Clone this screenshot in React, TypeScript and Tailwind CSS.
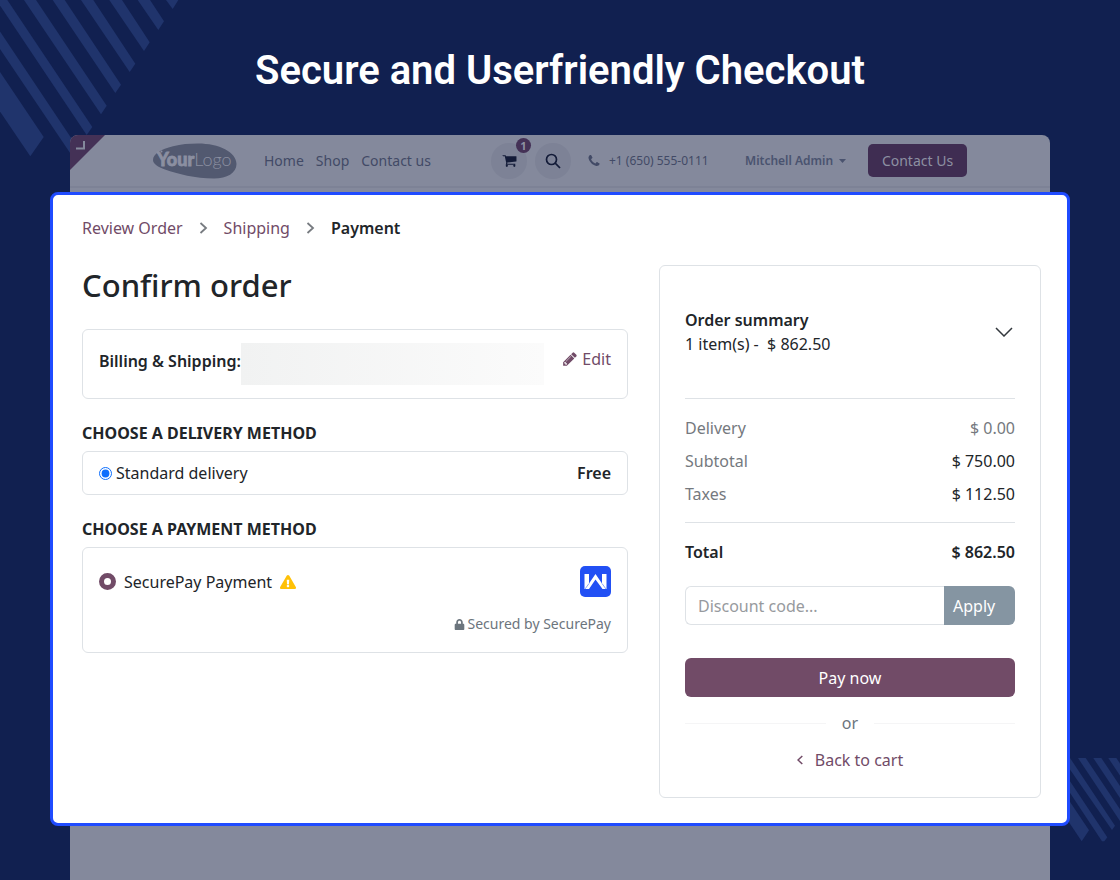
import React from "react";
import { FaExclamationTriangle, FaLock } from "react-icons/fa";

type GlyphProps = { d: string; className?: string };

function Glyph({ d, className }: GlyphProps) {
  return (
    <svg viewBox="0 0 1792 1792" fill="currentColor" className={className} aria-hidden="true">
      <path d={d} />
    </svg>
  );
}

const CART =
  "M704 1536q0 52-38 90t-90 38-90-38-38-90 38-90 90-38 90 38 38 90zm896 0q0 52-38 90t-90 38-90-38-38-90 38-90 90-38 90 38 38 90zm128-1088v512q0 24-16.5 42.5t-40.5 21.5l-1044 122q13 60 13 70 0 16-24 64h920q26 0 45 19t19 45-19 45-45 19h-1024q-26 0-45-19t-19-45q0-11 8-31.5t16-36 21.5-40 15.5-29.5l-177-823h-204q-26 0-45-19t-19-45 19-45 45-19h256q16 0 28.5 6.5t19.5 15.5 13 24.5 8 26 5.5 29.5 4.5 26h1201q26 0 45 19t19 45z";
const PENCIL =
  "M491 1536l91-91-235-235-91 91v107h128v128h107zm523-928q0-22-22-22-10 0-17 7l-542 542q-7 7-7 17 0 22 22 22 10 0 17-7l542-542q7-7 7-17zm-54-192l416 416-832 832h-416v-416zm683 96q0 53-37 90l-166 166-416-416 166-165q36-38 90-38 53 0 91 38l235 234q37 39 37 91z";
const PHONE =
  "M1600 1240q0 27-10 70.5t-21 68.5q-21 50-122 106-94 51-186 51-27 0-53-3.5t-57.5-12.5-47-14.5-55.5-20.5-49-18q-98-35-175-83-127-79-264-216t-216-264q-48-77-83-175-3-9-18-49t-20.5-55.5-14.5-47-12.5-57.5-3.5-53q0-92 51-186 56-101 106-122 25-11 68.5-21t70.5-10q14 0 21 3 18 6 53 76 11 19 30 54t35 63.5 31 53.5q3 4 17.5 25t21.5 35.5 7 28.5q0 20-28.5 50t-62 55-62 53-28.5 46q0 9 5 22.5t8.5 20.5 14 24 11.5 19q76 137 174 235t235 174q2 1 19 11.5t24 14 20.5 8.5 22.5 5q18 0 46-28.5t53-62 55-62 50-28.5q14 0 28.5 7t35.5 21.5 25 17.5q25 15 53.5 31t63.5 35 54 30q70 35 76 53 3 7 3 21z";

function TopStripes() {
  return (
    <svg width="180" height="160" viewBox="0 0 180 160" fill="#20346c" className="absolute left-0 top-0" aria-hidden="true">
      <path d="M166 0H178.300L172.700 9Z" />
      <path d="M137.700 0H150L164 21.300L158.300 30Z" />
      <path d="M109.300 0H122L149.700 42.300L144 51Z" />
      <path d="M81 0H93.300L135.300 63.700L129.700 72Z" />
      <path d="M52.700 0H64.700L121 84.700L115.300 93Z" />
      <path d="M24 0H36L106.700 105.700L101 114.300Z" />
      <path d="M-3.700 0H7.300L92.300 127L86.700 135Z" />
      <path d="M0 31.400L78 148.300L72.300 156.300L0 49Z" />
      <path d="M0 72L43.700 137L30.300 156.300L0 111.500Z" />
    </svg>
  );
}

function BottomStripes() {
  return (
    <svg width="60" height="84" viewBox="0 0 60 84" fill="#20346c" className="absolute bottom-[38px] right-0" aria-hidden="true">
      <path d="M48.300 0H56.300L60 5.500V17.500Z" />
      <path d="M33.300 0H41.300L60 28V40Z" />
      <path d="M18 0H25.700L60 51.300V63Z" />
      <path d="M2 0H10L55 67.700L52 72Z" />
      <path d="M-13 0H-5.500L47.300 79.300L44.300 83.300H42Z" />
      <path d="M-34 0H-19.300L29 72.300L21.700 83.300Z" />
    </svg>
  );
}

function Logo() {
  return (
    <svg width="84" height="36" viewBox="0 0 84 36" role="img" aria-label="YourLogo">
      <path
        d="M0 17C0 11 8 6 20 3.200C28 1.200 36 .5 45 .5C66 .5 83.500 9 83.500 21C83.500 30 74 35.500 61 35.500C42 35.500 25 31 12 26.500C5 24 0 21 0 17Z"
        fill="#525970"
      />
      <text x="4" y="23" fontSize="18" fill="#8b8fa1" fontFamily="Lato, sans-serif">
        <tspan fontWeight="900" stroke="#8b8fa1" strokeWidth="0.800">Your</tspan>
        <tspan fontWeight="300">Logo</tspan>
      </text>
      <circle cx="5" cy="9.500" r="1.200" fill="#8b8fa1" />
      <circle cx="8.500" cy="8.500" r="1" fill="#8b8fa1" />
    </svg>
  );
}

function SiteHeader() {
  return (
    <header className="relative flex h-[53px] items-center overflow-hidden rounded-tl-lg border-b-2 border-[#7d8296] pl-[83px] text-sm text-[#424a66]">
      <svg width="35" height="35" viewBox="0 0 35 35" className="absolute left-0 top-0" aria-hidden="true">
        <path d="M0 0H35L0 35Z" fill="#443156" />
        <path d="M14 6V13.500H6" fill="none" stroke="#84899c" strokeWidth="2" />
      </svg>
      <a href="#home" className="mr-[27px] shrink-0"><Logo /></a>
      <nav className="flex w-[199px] shrink-0 gap-3">
        <a href="#home">Home</a>
        <a href="#shop">Shop</a>
        <a href="#contact" className="whitespace-nowrap">Contact us</a>
      </nav>
      <div className="ml-7 flex shrink-0 gap-2">
        <button aria-label="Cart" className="relative grid size-9 place-items-center rounded-full bg-[#7d8296] text-[#131b38]">
          <Glyph d={CART} className="size-[15px]" />
          <span className="absolute -right-1 -top-[5px] grid size-[15px] place-items-center rounded-full bg-[#443156] text-[11px] font-bold leading-none text-[#8d90a2]">1</span>
        </button>
        <button aria-label="Search" className="grid size-9 place-items-center rounded-full bg-[#7d8296] text-[#131b38]">
          <svg width="16" height="16" viewBox="0 0 16 16" fill="none" stroke="currentColor" strokeWidth="1.700" aria-hidden="true">
            <circle cx="6.500" cy="6.500" r="5" />
            <path d="M10.200 10.200L15 15" />
          </svg>
        </button>
      </div>
      <a href="tel:+16505550111" className="ml-4 flex w-[125px] shrink-0 items-center gap-2 whitespace-nowrap text-xs">
        <Glyph d={PHONE} className="size-[14px]" />
        +1 (650) 555-0111
      </a>
      <button className="ml-[33px] flex w-[103px] shrink-0 items-center gap-[6px] whitespace-nowrap text-xs font-semibold text-[#4a536f]">
        Mitchell Admin
        <svg width="7" height="4" viewBox="0 0 7 4" fill="currentColor" aria-hidden="true"><path d="M0 0H7L3.500 4Z" /></svg>
      </button>
      <a href="#contact" className="ml-5 grid h-[33px] w-[99px] shrink-0 place-items-center rounded-[5px] bg-[#3f2d52] text-sm text-[#8d90a2]">
        Contact Us
      </a>
    </header>
  );
}

function Chevron() {
  return (
    <svg width="9" height="12" viewBox="0 0 9 12" fill="none" stroke="#777b80" strokeWidth="1.800" aria-hidden="true">
      <path d="M1.500 1L7 6L1.500 11" />
    </svg>
  );
}

function SecurePayLogo() {
  return (
    <svg width="31" height="31" viewBox="0 0 31 31" aria-hidden="true">
      <rect width="31" height="31" rx="5" fill="#2250f4" />
      <path d="M4.500 8H9V17.500L15.500 8L22 17.500V8H26.500V23H22.500L15.500 13.500L9 23H4.500Z" fill="#fff" />
      <path d="M9 17.500L5 23M22 17.500L26 23" stroke="#8ea4f8" strokeWidth="1" />
    </svg>
  );
}

type RowProps = { label: string; value: string; muted?: boolean };

function SummaryRow({ label, value, muted }: RowProps) {
  return (
    <tr className="h-[33px]">
      <th scope="row" className="p-0 text-left font-normal text-[#75797e]">{label}</th>
      <td className={muted ? "p-0 text-right text-[#75797e]" : "p-0 text-right"}>{value}</td>
    </tr>
  );
}

function OrderSummary() {
  return (
    <aside className="rounded-md border border-[#dee2e6] px-[25px] pb-[25px] pt-[42px]">
      <button className="flex w-full items-center justify-between pr-[2px] text-left">
        <span>
          <span className="block font-semibold">Order summary</span>
          <span className="block whitespace-pre">1 item(s) -  $ 862.50</span>
        </span>
        <svg width="18" height="10" viewBox="0 0 18 10" fill="none" stroke="#33383d" strokeWidth="1.500" aria-hidden="true">
          <path d="M1 1L9 9L17 1" />
        </svg>
      </button>
      <hr className="mb-3 mt-[42px] border-[#dee2e6]" />
      <table className="w-full">
        <tbody>
          <SummaryRow label="Delivery" value="$ 0.00" muted />
          <SummaryRow label="Subtotal" value="$ 750.00" />
          <SummaryRow label="Taxes" value="$ 112.50" />
        </tbody>
      </table>
      <hr className="my-3 border-[#dee2e6]" />
      <div className="flex h-[33px] items-center justify-between font-semibold">
        <span>Total</span>
        <span>$ 862.50</span>
      </div>
      <form className="mt-[18px] flex h-[39px]" onSubmit={(e) => e.preventDefault()}>
        <input
          type="text"
          aria-label="Discount code"
          placeholder="Discount code..."
          className="min-w-0 flex-1 rounded-l-md border border-r-0 border-[#dee2e6] px-3 placeholder:text-[#979a9e]"
        />
        <button className="w-[71px] rounded-r-md bg-[#8595a2] pl-[9px] text-left text-white">Apply</button>
      </form>
      <button className="mt-[33px] h-[39px] w-full rounded-md bg-[#714b67] text-white">Pay now</button>
      <div className="mt-[14px] flex items-center gap-4 text-[#6c757d]">
        <hr className="flex-1 border-[#f5f5f6]" />
        or
        <hr className="flex-1 border-[#f5f5f6]" />
      </div>
      <a href="#cart" className="mt-[13px] flex items-center justify-center gap-3 text-[#714b67]">
        <svg width="6" height="10" viewBox="0 0 6 10" fill="none" stroke="currentColor" strokeWidth="1.500" aria-hidden="true">
          <path d="M5.300 1L1 5L5.300 9" />
        </svg>
        Back to cart
      </a>
    </aside>
  );
}

function Checkout() {
  return (
    <main className="relative -mx-5 mt-1 rounded-lg border-3 border-[#1f4bff] bg-white pb-[25px] pl-[29px] pr-[26px] pt-[21px] text-base leading-6 text-[#212529]">
      <nav aria-label="Checkout steps" className="flex items-center gap-4 text-[#714b67]">
        <a href="#review">Review Order</a>
        <Chevron />
        <a href="#shipping">Shipping</a>
        <Chevron />
        <span className="font-semibold text-[#212529]">Payment</span>
      </nav>
      <div className="mt-[25px] grid grid-cols-[546fr_382fr] gap-[31px]">
        <div>
          <h1 className="text-[31px] font-medium leading-10">Confirm order</h1>

          <section className="mt-6 flex h-[70px] justify-between rounded-md border border-[#dee2e6] px-4">
            <div className="flex flex-1 pt-[13px]">
              <span className="whitespace-nowrap pt-[6px] font-semibold">Billing &amp; Shipping:</span>
              <div className="mr-[18px] h-[42px] flex-1 bg-linear-to-r from-[#f1f2f2] to-[#fbfbfb]" />
            </div>
            <a href="#edit" className="mt-[17px] flex h-6 items-center gap-1 text-[#714b67]">
              <Glyph d={PENCIL} className="size-4" />
              Edit
            </a>
          </section>

          <h2 className="mb-[6px] mt-[22px] font-bold uppercase">Choose a delivery method</h2>
          <label className="flex h-11 items-center gap-1 rounded-md border border-[#dee2e6] px-4">
            <input type="radio" name="delivery" defaultChecked className="size-[13px] accent-[#0d6efd]" />
            <span className="flex-1">Standard delivery</span>
            <span className="font-semibold">Free</span>
          </label>

          <h2 className="mb-[6px] mt-[22px] font-bold uppercase">Choose a payment method</h2>
          <section className="rounded-md border border-[#dee2e6] px-4 pb-[16px] pt-[18px]">
            <div className="flex items-center justify-between">
              <label className="flex items-center gap-2">
                <input type="radio" name="payment" defaultChecked className="size-[17px] appearance-none rounded-full border-5 border-[#714b67] bg-white" />
                SecurePay Payment
                <FaExclamationTriangle className="size-4 text-[#ffc107]" aria-hidden="true" />
              </label>
              <SecurePayLogo />
            </div>
            <p className="mt-[15px] flex items-center justify-end gap-[2px] text-sm leading-6 text-[#6c757d]">
              <FaLock className="size-[11px]" aria-hidden="true" />
              Secured by SecurePay
            </p>
          </section>
        </div>
        <OrderSummary />
      </div>
    </main>
  );
}

export default function App() {
  return (
    <div className="relative flex min-h-screen flex-col overflow-hidden bg-[#112050] font-['Noto_Sans',sans-serif]">
      <TopStripes />
      <BottomStripes />
      <p className="relative pt-[47px] text-center font-[Roboto,sans-serif] text-[40px] font-semibold leading-[48px] text-white">
        Secure and Userfriendly Checkout
      </p>
      <div className="relative mx-[70px] mt-10 flex-1 rounded-t-lg bg-[#84899c]">
        <SiteHeader />
        <Checkout />
      </div>
    </div>
  );
}
